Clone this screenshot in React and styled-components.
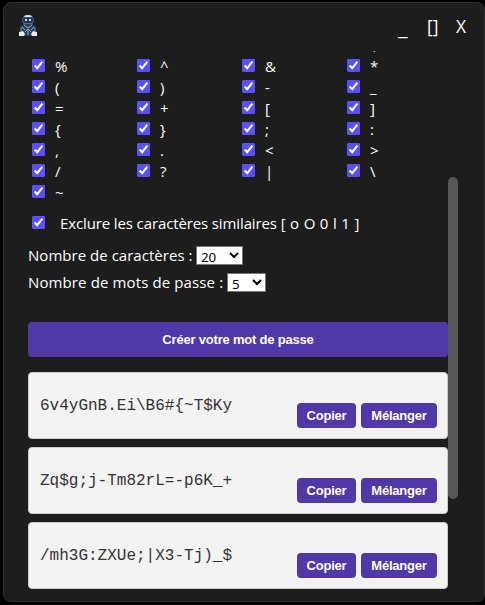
import React from "react";
import styled, { createGlobalStyle } from "styled-components";

const GlobalStyle = createGlobalStyle`
  * { box-sizing: border-box; }
  html, body { margin: 0; background: #000; overflow: hidden; }
`;

const Page = styled.div`
  width: 485px;
  height: 605px;
  padding: 2px 0 3px 3px;
  background: #000;
`;

const Window = styled.main`
  height: 600px;
  display: flex;
  flex-direction: column;
  overflow: hidden;
  color: #fff;
  background: #1d1d1d;
  border: 1px solid #303030;
  border-radius: 8px;
  font: 15px/21px "Open Sans", "Noto Sans", sans-serif;
`;

const TitleBar = styled.header`
  flex: none;
  height: 48px;
  padding: 11px 17px 0 14px;
  display: flex;
  justify-content: space-between;
`;

const Controls = styled.nav`
  display: flex;
  gap: 20px;
  font-size: 17.5px;
  line-height: 24px;
`;

const Control = styled.span`
  width: ${(p) => p.$w}px;
  white-space: nowrap;
  font-size: ${(p) => p.$size || 17.5}px;
`;

const Body = styled.section`
  flex: 1;
  min-height: 0;
  overflow: hidden;
  display: grid;
  grid-template-columns: 420px 10px;
  padding-left: 24px;
`;

const Content = styled.div`
  display: flex;
  flex-direction: column;
`;

const Track = styled.div`
  padding-top: 126px;
`;

const Thumb = styled.div`
  height: 322px;
  border-radius: 5px;
  background: #575757;
`;

const Symbols = styled.div`
  display: grid;
  grid-template-columns: repeat(4, 105px);
  grid-auto-rows: 21px;
  margin-top: -16px;
`;

const Check = styled.label`
  display: flex;
  align-items: flex-start;
  padding-left: 4px;
  gap: ${(p) => p.$gap || 10}px;
  height: 21px;
  grid-column-start: ${(p) => p.$column || "auto"};
`;

const Box = styled.input`
  flex: none;
  width: 13px;
  height: 13px;
  margin: 3px 0 0;
  accent-color: #5a4fff;
`;

const Exclude = styled.div`
  margin-top: 10px;
  height: 29px;
`;

const ExcludeText = styled.span`
  letter-spacing: -0.12px;
  white-space: nowrap;
`;

const Similar = styled.span`
  letter-spacing: 0.32px;
`;

const Field = styled.label`
  display: flex;
  align-items: center;
  height: 27px;
  gap: 3px;
`;

const FieldName = styled.span`
  width: ${(p) => p.$w}px;
  white-space: nowrap;
  letter-spacing: ${(p) => p.$spacing}px;
`;

const Select = styled.select`
  width: ${(p) => p.$w}px;
  height: 19px;
  margin: 0;
  padding: 0 0 1px;
  color: #000;
  background-color: #fff;
  border: 1px solid #767676;
  border-radius: 0;
  font: 13.333px/16px "Noto Sans", sans-serif;
`;

const Button = styled.button`
  height: 25px;
  width: ${(p) => p.$w}px;
  padding: 0;
  border: 0;
  border-radius: 4px;
  color: #fff;
  background: #5038a8;
  font: bold 13px "Liberation Sans", Arial, sans-serif;
  letter-spacing: -0.2px;
`;

const CreateButton = styled(Button)`
  flex: none;
  width: 100%;
  height: 35px;
  margin: 26px 0 15px;
`;

const Passwords = styled.div`
  display: flex;
  flex-direction: column;
  gap: 8px;
`;

const Card = styled.article`
  height: 67px;
  padding: 0 10px 0 11px;
  display: flex;
  justify-content: space-between;
  align-items: center;
  border: 1px solid #ccc;
  border-radius: 4px;
  background: #f3f3f3;
`;

const Password = styled.code`
  color: #333;
  font: 16px "Liberation Mono", "Courier New", monospace;
`;

const Actions = styled.div`
  display: flex;
  gap: 5px;
  padding-top: 20px;
`;

const symbols = ["$", "%", "^", "&", "*", "(", ")", "-", "_", "=", "+", "[", "]", "{", "}", ";", ":", ",", ".", "<", ">", "/", "?", "|", "\\", "~"];
const passwords = ["6v4yGnB.Ei\\B6#{~T$Ky", "Zq$g;j-Tm82rL=-p6K_+", "/mh3G:ZXUe;|X3-Tj)_$"];

function Robot() {
  return (
    <svg width="20" height="24" viewBox="0 0 20 24" aria-hidden="true">
      <path d="M5 3 Q10-1 15 3 L16 7 14 11H6L4 7Z" fill="#566b8b" />
      <path d="M6 2 Q10 0 14 2L13 3H7Z" fill="#dce5ef" />
      <rect x="5" y="3.5" width="10" height="5.5" rx="2" fill="#193259" />
      <path d="M7 5h2v2H7zM11 5h2v2h-2z" fill="#c9d9ec" />
      <path d="M3 12 7 10h6l4 2 1 9-5 1H7l-5-1Z" fill="#263d5b" />
      <path d="m6 11 4 3 4-3M4 13l3 3M16 13l-3 3M7 18l3-3 3 3M10 15v6" fill="none" stroke="#9eb0c5" strokeWidth="1" />
      <path d="M3 13v4M17 13v4" stroke="#6d819c" strokeWidth="1.2" />
      <path d="M1 18 5 17 7 20 6 22H1ZM19 18l-4-1-2 3 1 2h5Z" fill="#e6ebf1" />
    </svg>
  );
}

export default function App() {
  return (
    <Page>
      <GlobalStyle />
      <Window>
        <TitleBar>
          <Robot />
          <Controls>
            <Control $w={9} $size={22}>_</Control>
            <Control $w={9}>[]</Control>
            <Control $w={11}>X</Control>
          </Controls>
        </TitleBar>
        <Body>
          <Content>
            <Symbols>
              {symbols.map((s, i) => (
                <Check key={s} $column={i === 0 ? 4 : undefined}>
                  <Box type="checkbox" defaultChecked />
                  <span>{s}</span>
                </Check>
              ))}
            </Symbols>
            <Exclude>
              <Check $gap={15}>
                <Box type="checkbox" defaultChecked />
                <ExcludeText>
                  Exclure les caractères similaires <Similar>[ o O 0 l 1 ]</Similar>
                </ExcludeText>
              </Check>
            </Exclude>
            <Field>
              <FieldName $w={165} $spacing={0.03}>Nombre de caractères :</FieldName>
              <Select $w={47} defaultValue="20"><option>20</option></Select>
            </Field>
            <Field>
              <FieldName $w={196} $spacing={0.12}>Nombre de mots de passe :</FieldName>
              <Select $w={39} defaultValue="5"><option>5</option></Select>
            </Field>
            <CreateButton>Créer votre mot de passe</CreateButton>
            <Passwords>
              {passwords.map((p) => (
                <Card key={p}>
                  <Password>{p}</Password>
                  <Actions>
                    <Button $w={59}>Copier</Button>
                    <Button $w={76}>Mélanger</Button>
                  </Actions>
                </Card>
              ))}
            </Passwords>
          </Content>
          <Track><Thumb /></Track>
        </Body>
      </Window>
    </Page>
  );
}
